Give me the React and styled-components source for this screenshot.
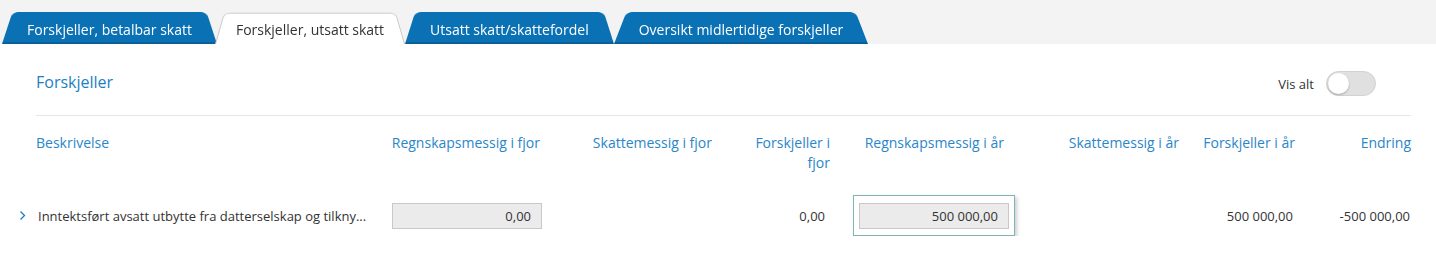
import React, { useState } from "react";
import styled, { createGlobalStyle } from "styled-components";

const GlobalStyle = createGlobalStyle`
  html, body {
    margin: 0;
    padding: 0;
    background: #fff;
    font-family: "Open Sans", "Liberation Sans", sans-serif;
  }
`;

const TabBar = styled.div`
  height: 44px;
  background: #f3f3f3;
  display: flex;
  align-items: flex-end;
  padding-left: 2px;
`;

const Tab = styled.div`
  position: relative;
  z-index: ${(p) => (p.$active ? 3 : 1)};
  height: 30px;
  display: flex;
  align-items: center;
  padding: 0 ${(p) => (p.$active ? "21px" : "25px")};
  margin-right: ${(p) => (p.$overlap ? "-2px" : "0")};
  font-size: 14px;
  color: ${(p) => (p.$active ? "#333" : "#fff")};
  cursor: pointer;
  white-space: nowrap;

  &::before {
    content: "";
    position: absolute;
    left: 0;
    right: 0;
    bottom: 0;
    height: 35px;
    z-index: -1;
    border-radius: 6px 6px 0 0;
    background: ${(p) => (p.$active ? "#fff" : "#0a71b4")};
    border: ${(p) => (p.$active ? "1px solid #c8c8c8" : "none")};
    border-bottom: ${(p) => (p.$active ? "none" : "2px solid #0a5f99")};
    transform: perspective(100px) rotateX(17deg);
    transform-origin: bottom;
  }
`;

const Content = styled.div`
  padding: 27px 25px 0 36px;
`;

const TitleRow = styled.div`
  height: 25px;
  display: flex;
  align-items: center;
  justify-content: space-between;
`;

const Title = styled.h2`
  margin: 0;
  font-size: 16px;
  font-weight: 400;
  color: #1b7fc4;
  margin-top: -3px;
`;

const ToggleLabel = styled.label`
  display: flex;
  align-items: center;
  gap: 12px;
  font-size: 13px;
  color: #333;
  margin-right: 35px;
  cursor: pointer;
`;

const Track = styled.span`
  position: relative;
  width: 48px;
  height: 23px;
  border-radius: 13px;
  background: ${(p) => (p.$on ? "#0a71b4" : "#e0e0e0")};
  border: 1px solid #d2d2d2;
`;

const Knob = styled.span`
  position: absolute;
  top: 1px;
  left: ${(p) => (p.$on ? "26px" : "1px")};
  width: 21px;
  height: 21px;
  border-radius: 50%;
  background: #fff;
  box-shadow: 0 1px 2px rgba(0, 0, 0, 0.25);
`;

const Divider = styled.div`
  height: 1px;
  background: #e6e6e6;
  margin-top: 19px;
`;

const Grid = styled.div`
  display: grid;
  grid-template-columns: 24px 344px 162px 172px 116px 185px 164px 116px 116px;
  margin-left: -24px;
`;

const HeaderRow = styled(Grid)`
  margin-top: 17px;
  align-items: start;
`;

const HeadCell = styled.div`
  font-size: 14px;
  line-height: 20px;
  color: #2a86c8;
  text-align: ${(p) => (p.$left ? "left" : "right")};
  padding-left: ${(p) => (p.$pl === undefined ? 16 : p.$pl)}px;
  padding-right: ${(p) => (p.$pr === undefined ? 2 : p.$pr)}px;
`;

const DataRow = styled(Grid)`
  margin-top: 22px;
  align-items: center;
  height: 41px;
`;

const Chevron = styled.span`
  display: flex;
  align-items: center;
  padding-left: 7px;
  color: #1b7fc4;
`;

const Desc = styled.div`
  font-size: 13px;
  color: #333;
  padding: 0 10px 0 2px;
  white-space: nowrap;
  overflow: hidden;
  text-overflow: ellipsis;
`;

const NumCell = styled.div`
  font-size: 13px;
  color: #333;
  text-align: right;
  padding-right: ${(p) => p.$pr || 2}px;
`;

const InputCell = styled.div`
  display: flex;
  justify-content: flex-end;
`;

const FocusRing = styled.div`
  padding: 7px 5px 6px 5px;
  border: 1px solid #7fb4ba;
  box-shadow: 2px 2px 4px rgba(0, 0, 0, 0.2);
  background: #fff;
`;

const Input = styled.input`
  box-sizing: border-box;
  width: 150px;
  height: 26px;
  border: 1px solid #c8c8c8;
  background: #ebebeb;
  font-family: "Open Sans", "Liberation Sans", sans-serif;
  font-size: 13px;
  color: #333;
  text-align: right;
  padding: 0 10px;
  outline: none;
`;

const tabs = [
  "Forskjeller, betalbar skatt",
  "Forskjeller, utsatt skatt",
  "Utsatt skatt/skattefordel",
  "Oversikt midlertidige forskjeller",
];

const App = () => {
  const [active, setActive] = useState(1);
  const [showAll, setShowAll] = useState(false);

  return (
    <>
      <GlobalStyle />
      <TabBar>
        {tabs.map((t, i) => (
          <Tab
            key={t}
            $active={active === i}
            $overlap={i === 0}
            onClick={() => setActive(i)}
          >
            {t}
          </Tab>
        ))}
      </TabBar>
      <Content>
        <TitleRow>
          <Title>Forskjeller</Title>
          <ToggleLabel onClick={() => setShowAll(!showAll)}>
            Vis alt
            <Track $on={showAll}>
              <Knob $on={showAll} />
            </Track>
          </ToggleLabel>
        </TitleRow>
        <Divider />
        <HeaderRow>
          <span />
          <HeadCell $left $pl={0}>Beskrivelse</HeadCell>
          <HeadCell $pl={0}>Regnskapsmessig i fjor</HeadCell>
          <HeadCell>Skattemessig i fjor</HeadCell>
          <HeadCell $pr={0}>Forskjeller i fjor</HeadCell>
          <HeadCell $pr={11}>Regnskapsmessig i år</HeadCell>
          <HeadCell $pr={0}>Skattemessig i år</HeadCell>
          <HeadCell $pr={0}>Forskjeller i år</HeadCell>
          <HeadCell $pr={0}>Endring</HeadCell>
        </HeaderRow>
        <DataRow>
          <Chevron>
            <svg width="7" height="11" viewBox="0 0 7 11">
              <path d="M1.5 1.5l4 4-4 4" fill="none" stroke="currentColor" strokeWidth="1.3" />
            </svg>
          </Chevron>
          <Desc>Inntektsført avsatt utbytte fra datterselskap og tilkny...</Desc>
          <InputCell>
            <Input defaultValue="0,00" />
          </InputCell>
          <span />
          <NumCell $pr={5}>0,00</NumCell>
          <InputCell>
            <FocusRing>
              <Input defaultValue="500 000,00" />
            </FocusRing>
          </InputCell>
          <span />
          <NumCell>500 000,00</NumCell>
          <NumCell $pr={1}>-500 000,00</NumCell>
        </DataRow>
      </Content>
    </>
  );
};

export default App;
